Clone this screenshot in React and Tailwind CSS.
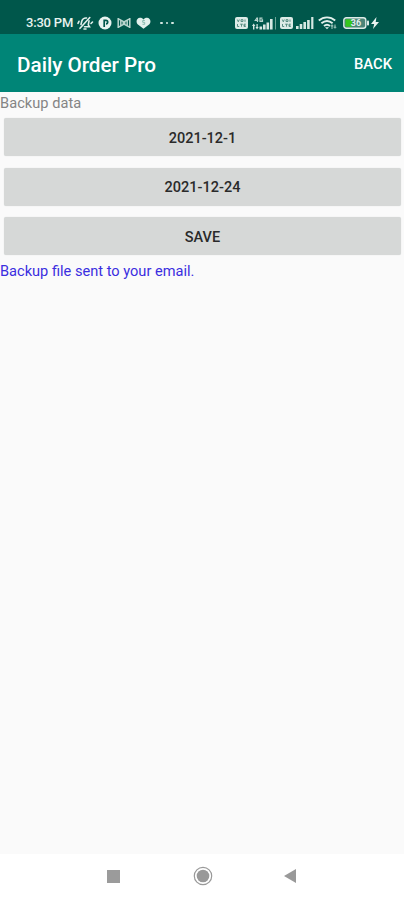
function BellOff() {
  return (
    <svg width="18" height="16" viewBox="0 0 18 16" fill="none" stroke="#e2f0ec" strokeWidth="1.6" strokeLinecap="round">
      <path d="M5 9.500l.8-3.500C6.500 4 8.200 2.800 10.500 3M13 5.800l-.7 4 1.200 2H8.500" />
      <path d="M4 13.300L13.800 2.500" />
      <path d="M2 8.300L3 6.300M15 8.500l1.500-1.500M8 14h2" />
    </svg>
  )
}

function ParkingBadge() {
  return (
    <svg width="14" height="14" viewBox="0 0 14 14">
      <circle cx="7" cy="7" r="6.500" fill="#e8f3f0" />
      <path d="M6.200 11V4.400h1.800a1.700 1.700 0 0 1 0 3.400" fill="none" stroke="#00574b" strokeWidth="1.700" />
    </svg>
  )
}

function BowTie() {
  return (
    <svg width="14" height="12" viewBox="0 0 14 12" fill="none" stroke="#b9d5ce" strokeWidth="1.500">
      <path d="M1.200 1v10M12.800 1v10M1.500 1.800L7 5l5.500-3.200M1.500 10.200L7 7l5.500 3.200M3.800 3.500v5M10.200 3.500v5" />
      <path d="M5.500 6h3" strokeWidth="2" />
    </svg>
  )
}

function HeartBadge() {
  return (
    <svg width="15" height="12" viewBox="0 0 15 12">
      <path d="M7.500 11.700L1.600 7.200C-.6 4.700.9.7 4 .7c1.600 0 2.700.6 3.500 1.700C8.300 1.300 9.400.7 11 .7c3.100 0 4.600 4 2.400 6.500z" fill="#e2f0ec" />
      <path d="M8.800 3.500H6.700v1.800h2v2H6.500" fill="none" stroke="#8bbab0" strokeWidth="1" />
    </svg>
  )
}

function VolteBadge() {
  return (
    <svg width="13" height="12" viewBox="0 0 13 12">
      <rect width="13" height="12" rx="2" fill="#dcebe7" />
      <path d="M2.300 2.500l1 2.300 1-2.300M6 2.700h2v1.800H6zM10 2.500v2.300M2.500 7v2.500h1.700M5.200 7.200h2.600M6.500 7.200v2.500M10.800 7.200H9v2.300h1.800M9 8.400h1.500" fill="none" stroke="#4b8578" strokeWidth=".9" />
    </svg>
  )
}

function SignalBars() {
  return (
    <svg width="18" height="12" viewBox="0 0 18 12" fill="#d6e8e3">
      <rect x="0" y="9" width="2.600" height="3" />
      <rect x="3.700" y="7" width="2.600" height="5" />
      <rect x="7.400" y="5" width="2.600" height="7" />
      <rect x="11.100" y="3" width="2.600" height="9" />
      <rect x="15.200" y="0" width="2.200" height="12" />
    </svg>
  )
}

function DataSignal() {
  return (
    <svg width="25" height="13" viewBox="0 0 25 13" fill="#d6e8e3">
      <path d="M5.300.5L3.300 3.500h3M5.500.5V5M10.500 1.200H8v3.200h2.500V2.900H9.300" fill="none" stroke="#b9d5ce" strokeWidth="1.200" />
      <path d="M1.700 6.500L0 9h1v3.500h1.400V9h1z" />
      <path d="M5 12.500L3.500 10h1V7h1.200v3h1z" />
      <rect x="7.500" y="9.500" width="2.600" height="3" />
      <rect x="11" y="7.500" width="2.600" height="5" />
      <rect x="14.500" y="5.500" width="2.600" height="7" />
      <rect x="18" y="2" width="2.600" height="10.500" />
      <rect x="23" y="0" width="1" height="12.500" fill="#6ba497" />
    </svg>
  )
}

function Wifi() {
  return (
    <svg width="20" height="14" viewBox="0 0 20 14" fill="none" stroke="#e2f0ec" strokeWidth="1.900">
      <path d="M.8 4.500c4.900-4.200 11.500-4.200 16.400 0M3.400 7.300c3.600-3 7.600-3 11.200 0M6 10c2-1.700 4-1.700 6 0" />
      <path d="M7 11.200h4L9 13.300z" fill="#e2f0ec" stroke="none" />
      <path d="M14 13V9M12.800 10.300L14 9l1.200 1.300M17 8.500V12M15.800 10.800L17 12l1.200-1.200" stroke="#8bbab0" strokeWidth="1.200" />
    </svg>
  )
}

function Battery() {
  return (
    <div className="relative w-[26px] h-3">
      <svg width="26" height="12" viewBox="0 0 26 12">
        <rect x=".8" y=".8" width="22" height="10.400" rx="2.500" fill="#4b8578" stroke="#dcebe7" strokeWidth="1.400" />
        <path d="M2.500 2.300h6.500v7.400H2.500z" fill="#35c71d" />
        <rect x="24" y="3.500" width="2" height="5" rx=".8" fill="#dcebe7" />
      </svg>
      <span className="absolute left-[7px] top-0 w-3 text-center text-[9px] leading-3 font-bold text-[#e2f0ec]">36</span>
    </div>
  )
}

function StatusBar() {
  return (
    <div className="h-[34px] shrink-0 bg-[#00574b] flex items-start pt-[15px] pl-[26px] pr-[25px] text-[#e8f3f0]">
      <div className="flex items-center h-4">
        <span className="w-[48px] text-[13px] leading-4 font-medium tracking-[-0.2px] whitespace-nowrap">3:30 PM</span>
        <div className="ml-[2px]"><BellOff /></div>
        <div className="ml-[4px]"><ParkingBadge /></div>
        <div className="ml-[5px]"><BowTie /></div>
        <div className="ml-[5px]"><HeartBadge /></div>
        <div className="ml-[9px] flex gap-[3px]">
          <i className="size-[2.500px] rounded-full bg-[#d6e8e3]" />
          <i className="size-[2.500px] rounded-full bg-[#d6e8e3]" />
          <i className="size-[2.500px] rounded-full bg-[#d6e8e3]" />
        </div>
      </div>
      <div className="ml-auto flex items-center h-4">
        <VolteBadge />
        <div className="ml-[4px]"><DataSignal /></div>
        <div className="ml-[3px]"><VolteBadge /></div>
        <div className="ml-[3px]"><SignalBars /></div>
        <div className="ml-[4px]"><Wifi /></div>
        <div className="ml-[5px]"><Battery /></div>
        <svg className="ml-[2px]" width="8" height="12" viewBox="0 0 8 12" fill="#e8f3f0">
          <path d="M5.500 0L0 7h3.200L2 12l6-7H4.700z" />
        </svg>
      </div>
    </div>
  )
}

function GreyButton({ children }) {
  return (
    <button className="h-[38px] w-full rounded-[2px] bg-[#d6d8d7] pt-[3px] text-[14.500px] leading-5 font-medium text-[#2a2a2a] shadow-[0_0_1px_#d6d8d7]">
      {children}
    </button>
  )
}

export default function App() {
  return (
    <div className="w-[404px] h-[900px] flex flex-col overflow-hidden bg-[#fafafa] font-['Roboto',sans-serif]">
      <StatusBar />
      <header className="h-[58px] shrink-0 bg-[#008577] flex items-center justify-between pl-[17px] pr-[12px] text-white">
        <h1 className="text-[20.700px] leading-6 font-medium whitespace-nowrap pt-[3px]">Daily Order Pro</h1>
        <button className="text-[14.800px] leading-5 font-medium pt-[2px]">BACK</button>
      </header>
      <main className="flex-1">
        <p className="h-[26px] pt-[2px] text-[14.600px] leading-[19px] tracking-[0.050px] text-[#858585]">Backup data</p>
        <div className="flex flex-col gap-[11.500px] pl-[4px] pr-[3px]">
          <GreyButton>2021-12-1</GreyButton>
          <GreyButton>2021-12-24</GreyButton>
          <GreyButton>SAVE</GreyButton>
        </div>
        <p className="pt-[7px] text-[14.600px] leading-[19px] text-[#3a2ee0]">Backup file sent to your email.</p>
      </main>
      <nav className="h-[46px] shrink-0 bg-white">
        <div className="flex items-center h-[44px] pl-[107px]">
          <div className="size-[13px] bg-[#9b9b9b]" />
          <svg className="ml-[73px]" width="20" height="20" viewBox="0 0 20 20">
            <circle cx="10" cy="10" r="8.700" fill="none" stroke="#999" strokeWidth="1.200" />
            <circle cx="10" cy="10" r="6.300" fill="#999" />
          </svg>
          <svg className="ml-[71px]" width="12" height="14" viewBox="0 0 12 14">
            <path d="M0 7L12 0v14z" fill="#999" />
          </svg>
        </div>
      </nav>
    </div>
  )
}
